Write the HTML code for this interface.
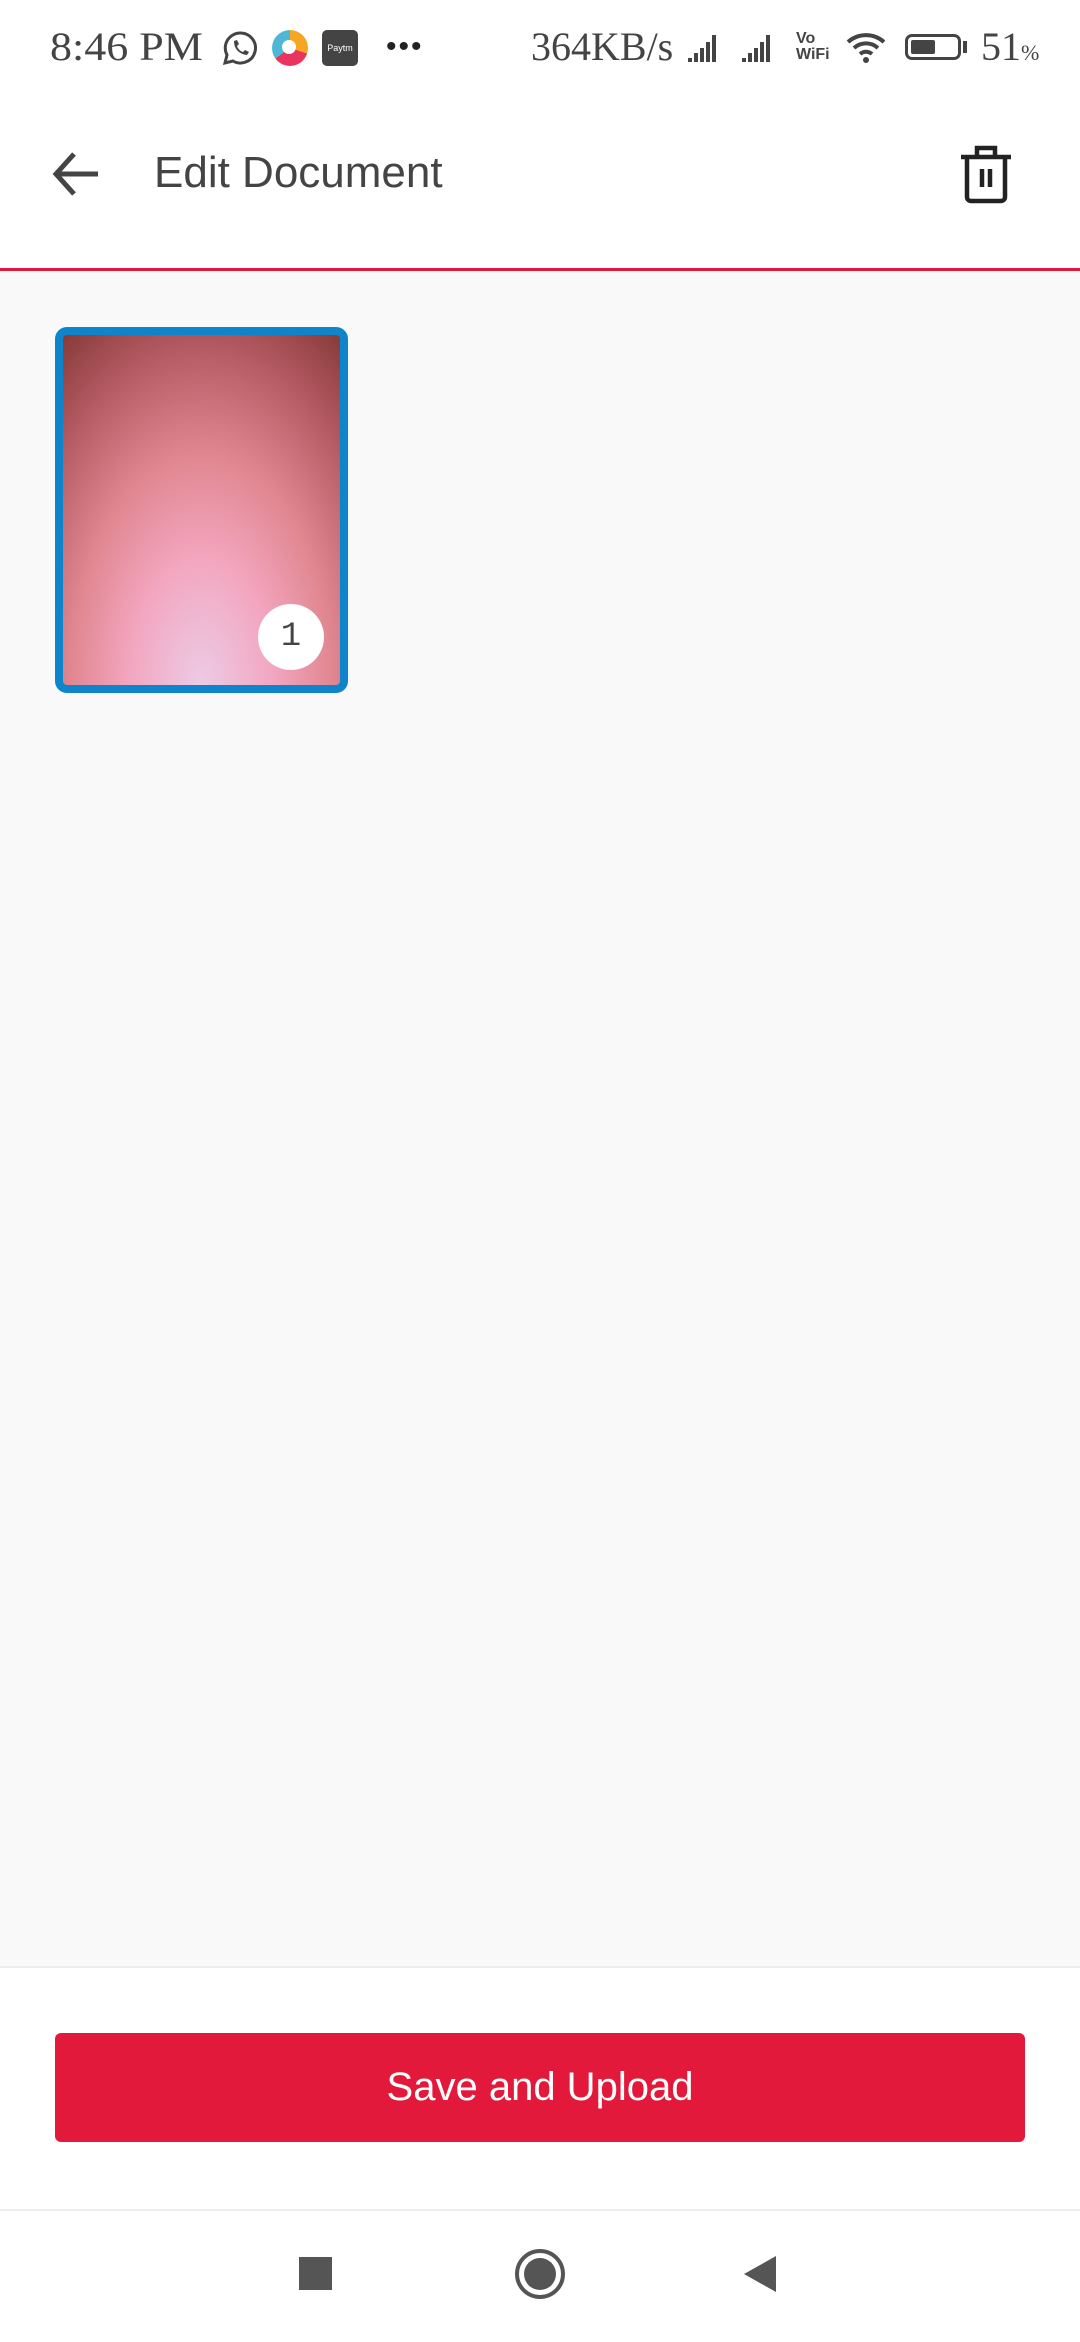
<!DOCTYPE html>
<html><head><meta charset="utf-8"><style>
body{margin:0;width:1080px;height:2340px;position:relative;background:#f9f9f9;font-family:"Liberation Sans",sans-serif;overflow:hidden}
.abs{position:absolute}
.sb{font-family:'Liberation Serif',serif;font-size:40px;color:#444;transform-origin:left center}
</style></head><body>
<div class="abs" style="left:0;top:0;width:1080px;height:268px;background:#fff"></div>
<div class="abs" style="left:0;top:268px;width:1080px;height:3px;background:#e2193a"></div>
<div class="abs sb" style="left:50px;top:23px;transform:scaleX(1.1)">8:46 PM</div>
<svg class="abs" style="left:222px;top:30px" width="36" height="36" viewBox="0 0 36 36"><path d="M18 3a15 15 0 0 0-13 22l-2 8 8-2A15 15 0 1 0 18 3z" fill="none" stroke="#444" stroke-width="3"/><path d="M12 11c0 8 5 13 13 14l2-3-4-2-2 2c-3-1-5-3-6-6l2-2-2-4z" fill="#444"/></svg>
<div class="abs" style="left:272px;top:30px;width:36px;height:36px;border-radius:50%;background:conic-gradient(#f5a623 0 30%,#e8345e 30% 65%,#4fb7d6 65% 100%)"></div>
<div class="abs" style="left:282px;top:40px;width:14px;height:14px;border-radius:50%;background:#fff"></div>
<div class="abs" style="left:322px;top:30px;width:36px;height:36px;border-radius:5px;background:#444;color:#fff;font-size:9px;line-height:36px;text-align:center">Paytm</div>
<div class="abs" style="left:386px;top:30px;font-size:30px;color:#222;letter-spacing:2px">•••</div>
<div class="abs sb" style="left:531px;top:23px;transform:scaleX(1.0)">364KB/s</div>
<svg class="abs" style="left:688px;top:32px" width="100" height="32" viewBox="0 0 100 32"><g fill="#444"><rect x="0" y="26" width="4" height="4"/><rect x="6" y="21" width="4" height="9"/><rect x="12" y="16" width="4" height="14"/><rect x="18" y="10" width="4" height="20"/><rect x="24" y="3" width="4" height="27"/><rect x="54" y="26" width="4" height="4"/><rect x="60" y="21" width="4" height="9"/><rect x="66" y="16" width="4" height="14"/><rect x="72" y="10" width="4" height="20"/><rect x="78" y="3" width="4" height="27"/></g></svg>
<div class="abs" style="left:796px;top:31px;font-size:16px;line-height:16px;color:#444;font-weight:bold">Vo<br>WiFi</div>
<svg class="abs" style="left:845px;top:30px" width="44" height="36" viewBox="0 0 44 36"><g fill="none" stroke="#444" stroke-width="4"><path d="M3 12a27 27 0 0 1 36 0"/><path d="M9 18a18 18 0 0 1 24 0"/><path d="M15 24a9 9 0 0 1 12 0"/></g><circle cx="21" cy="30" r="3" fill="#444"/></svg>
<div class="abs" style="left:905px;top:34px;width:56px;height:26px;border:3px solid #444;border-radius:7px;box-sizing:border-box"></div>
<div class="abs" style="left:911px;top:40px;width:24px;height:14px;background:#444;border-radius:2px"></div>
<div class="abs" style="left:963px;top:41px;width:4px;height:12px;background:#444"></div>
<div class="abs sb" style="left:981px;top:23px">51<span style="font-size:22px">%</span></div>
<svg class="abs" style="left:50px;top:148px" width="52" height="52" viewBox="0 0 52 52"><path d="M48 26H6M24 6L6 26l18 20" fill="none" stroke="#444" stroke-width="5"/></svg>
<div class="abs" style="left:154px;top:148px;font-size:44px;color:#444">Edit Document</div>
<svg class="abs" style="left:958px;top:144px" width="56" height="60" viewBox="0 0 56 60"><g fill="none" stroke="#222" stroke-width="4.5"><path d="M3 13h50M19 13V4h18v9M9 13v40a4 4 0 0 0 4 4h30a4 4 0 0 0 4-4V13M24 25v18M32 25v18"/></g></svg>
<div class="abs" style="left:55px;top:327px;width:293px;height:366px;border:8px solid #0e84cb;border-radius:12px;box-sizing:border-box;background:radial-gradient(ellipse 240px 420px at 50% 100%,#eccbe6 0%,#f3a6bf 30%,#e08690 55%,#b55b63 80%,#8a3c3c 100%)"></div>
<div class="abs" style="left:258px;top:604px;width:66px;height:66px;border-radius:50%;background:#fff;color:#444;font-size:34px;line-height:66px;text-align:center;font-family:'Liberation Mono',monospace">1</div>
<div class="abs" style="left:0;top:1966px;width:1080px;height:374px;background:#fff;border-top:2px solid #eee"></div>
<div class="abs" style="left:55px;top:2033px;width:970px;height:109px;background:#e2193a;border-radius:6px;color:#fff;font-size:40px;line-height:109px;text-align:center">Save and Upload</div>
<div class="abs" style="left:0;top:2209px;width:1080px;height:2px;background:#eee"></div>
<div class="abs" style="left:299px;top:2257px;width:33px;height:33px;background:#555"></div>
<div class="abs" style="left:515px;top:2249px;width:42px;height:42px;border:4px solid #555;border-radius:50%"></div>
<div class="abs" style="left:524px;top:2258px;width:32px;height:32px;background:#555;border-radius:50%"></div>
<svg class="abs" style="left:742px;top:2254px" width="36" height="40" viewBox="0 0 36 40"><path d="M34 2v36L2 20z" fill="#555"/></svg>
</body></html>
